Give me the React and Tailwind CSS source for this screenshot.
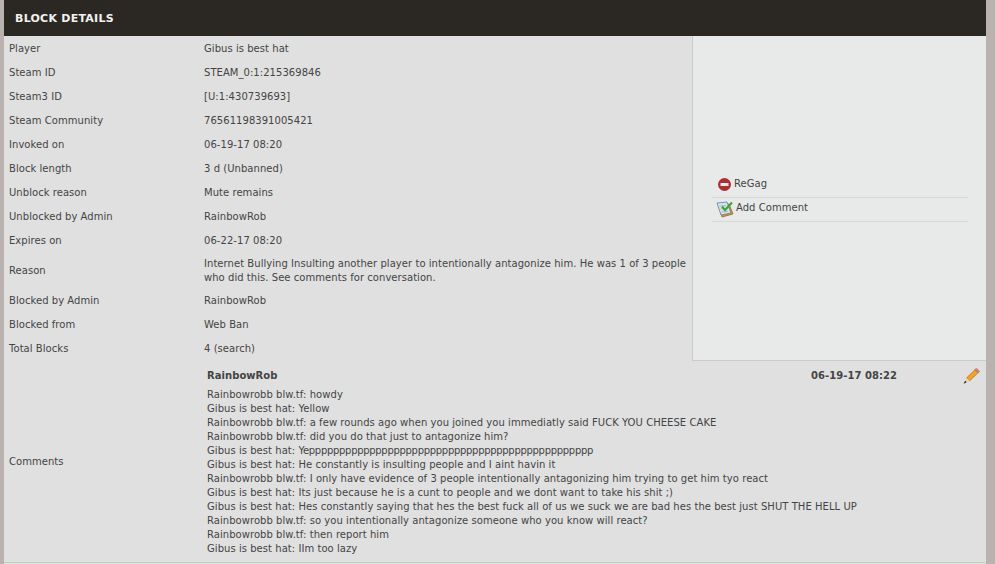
import React from "react";

const rows = [
  ["Player", "Gibus is best hat"],
  ["Steam ID", "STEAM_0:1:215369846"],
  ["Steam3 ID", "[U:1:430739693]"],
  ["Steam Community", "76561198391005421"],
  ["Invoked on", "06-19-17 08:20"],
  ["Block length", "3 d (Unbanned)"],
  ["Unblock reason", "Mute remains"],
  ["Unblocked by Admin", "RainbowRob"],
  ["Expires on", "06-22-17 08:20"],
  [
    "Reason",
    "Internet Bullying Insulting another player to intentionally antagonize him. He was 1 of 3 people who did this. See comments for conversation.",
  ],
  ["Blocked by Admin", "RainbowRob"],
  ["Blocked from", "Web Ban"],
  ["Total Blocks", "4 (search)"],
];

const comments = [
  "Rainbowrobb blw.tf: howdy",
  "Gibus is best hat: Yellow",
  "Rainbowrobb blw.tf: a few rounds ago when you joined you immediatly said FUCK YOU CHEESE CAKE",
  "Rainbowrobb blw.tf: did you do that just to antagonize him?",
  "Gibus is best hat: He constantly is insulting people and I aint havin it",
  "Rainbowrobb blw.tf: I only have evidence of 3 people intentionally antagonizing him trying to get him tyo react",
  "Gibus is best hat: Its just because he is a cunt to people and we dont want to take his shit ;)",
  "Gibus is best hat: Hes constantly saying that hes the best fuck all of us we suck we are bad hes the best just SHUT THE HELL UP",
  "Rainbowrobb blw.tf: so you intentionally antagonize someone who you know will react?",
  "Rainbowrobb blw.tf: then report him",
  "Gibus is best hat: IIm too lazy",
];

function StopIcon() {
  return (
    <svg width="13" height="13" viewBox="0 0 13 13">
      <circle cx="6.5" cy="6.5" r="6.5" fill="#a92f36" />
      <rect x="2.5" y="5" width="8" height="3" fill="#f4e6e6" />
    </svg>
  );
}

function NoteIcon() {
  return (
    <svg width="18" height="17" viewBox="0 0 18 17">
      <path d="M3 4 L13 3 L17 13 L6 16 Z" fill="#d9913a" stroke="#9a6a2c" strokeWidth="0.8" />
      <path d="M1 2 L11 1 L15 12 L5 14 Z" fill="#d5e2ea" stroke="#5f7f95" strokeWidth="0.8" />
      <path d="M3.5 5 L10 4.4 M4.5 8 L11 7.4 M5.5 11 L12 10.4" stroke="#9db3c2" strokeWidth="0.8" />
      <path d="M6 5.5 L9 9 L16 1.5" fill="none" stroke="#3fa53a" strokeWidth="2.2" />
    </svg>
  );
}

function PencilIcon() {
  return (
    <svg width="17" height="16" viewBox="0 0 17 16">
      <path d="M3.5 10 L12 1.8 L15 4.8 L6.5 13 Z" fill="#f0a526" stroke="#a8661a" strokeWidth="0.7" />
      <path d="M12 1.2 L13.5 0.2 L16.6 3.2 L15.2 5 Z" fill="#dc7f83" stroke="#a96064" strokeWidth="0.5" />
      <path d="M3.5 10 L6.5 13 L1 15.6 Z" fill="#f1d5a8" />
      <path d="M2.2 12.8 L3.6 14.3 L0.6 15.8 Z" fill="#1d1d1d" />
    </svg>
  );
}

export default function App() {
  return (
    <div className="w-[995px] h-[564px] overflow-hidden bg-[#bab2af] pl-[4px] pr-[9px] text-[10px] leading-[14px] tracking-[0.05px] text-[#444444] font-['DejaVu_Sans',Verdana,sans-serif]">
      {/* HEADER */}
      <div className="h-[36px] flex items-center pl-[11px] pt-[1px] bg-[#2b2722] text-[11px] tracking-[0.25px] font-bold text-[#f2f2f2]">
        BLOCK DETAILS
      </div>

      <div className="bg-[#e0e0e0] h-[527px] border-b border-[#c9c9c9]">
        <div className="flex">
          {/* DETAIL ROWS */}
          <div className="w-[688px] shrink-0">
            {rows.map(([label, value]) => (
              <div key={label} className="flex items-center min-h-[24px] pt-[5px] pb-[3px]">
                <div className="w-[200px] pl-[5px] shrink-0">{label}</div>
                <div className="pr-[2px]">{value}</div>
              </div>
            ))}
          </div>

          {/* ACTIONS */}
          <div className="flex-1 flex flex-col justify-center mb-[-1px] pb-[2px] pl-[19px] pr-[18px] bg-[#e8eaea] border-l border-b border-[#cccccc]">
            <div className="flex items-center h-[25px] pl-[6px] gap-[3px] border-b border-[#d8d8d8]">
              <StopIcon />
              <span className="mb-[2px]">ReGag</span>
            </div>
            <div className="flex items-center h-[24px] pl-[4px] gap-[2px] border-b border-[#d8d8d8]">
              <NoteIcon />
              <span className="mb-[3px]">Add Comment</span>
            </div>
          </div>
        </div>

        {/* COMMENTS */}
        <div className="flex h-[202px]">
          <div className="w-[203px] pl-[5px] pt-[2px] shrink-0 self-center">Comments</div>
          <div className="flex-1 pr-[6px] pt-[5px]">
            <div className="flex items-center h-[22px] font-bold">
              <div className="w-[604px]">RainbowRob</div>
              <div className="flex-1">06-19-17 08:22</div>
              <PencilIcon />
            </div>
            <div className="mt-[1px]">
              {comments.slice(0, 4).map((line) => (
                <div key={line}>{line}</div>
              ))}
              <div>
                Gibus is best hat:{" "}
                <span className="tracking-[-0.3px]">Yeppppppppppppppppppppppppppppppppppppppppppppppp</span>
              </div>
              {comments.slice(4).map((line) => (
                <div key={line}>{line}</div>
              ))}
            </div>
          </div>
        </div>
      </div>
      <div className="h-[1px] bg-[#d5ecd5]" />
    </div>
  );
}
